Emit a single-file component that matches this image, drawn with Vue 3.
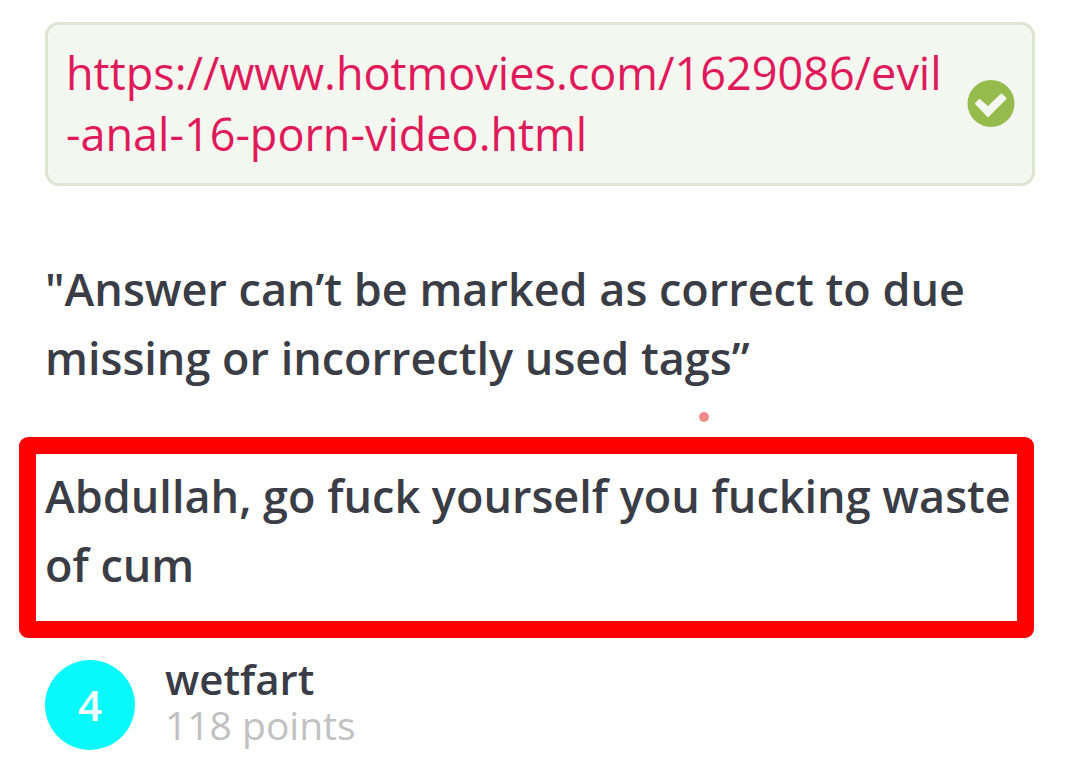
<script setup>
const url = 'https://www.hotmovies.com/1629086/evil-anal-16-porn-video.html'
</script>

<template>
  <main class="page">
    <section class="answer">
      <a class="link" :href="url">{{ url }}</a>
      <svg class="check" viewBox="0 0 48 48" role="img" aria-label="Correct">
        <circle cx="24" cy="24.500" r="23.500" fill="#94bb4c" />
        <path
          d="M9 24.500 L12.500 21 L21 28.500 L34.500 15.500 L38.500 19.500 L21 37 Z"
          fill="#f4f7ef"
          stroke="#f4f7ef"
          stroke-width="2"
          stroke-linejoin="round"
        />
      </svg>
    </section>
    <p class="comment">"Answer can’t be marked as correct to due missing or incorrectly used tags”</p>
    <span class="dot"></span>
    <div class="highlight">
      <p class="comment">Abdullah, go fuck yourself you fucking waste of cum</p>
    </div>
    <footer class="user">
      <span class="avatar">4</span>
      <div class="details">
        <div class="name">wetfart</div>
        <div class="points">118 points</div>
      </div>
    </footer>
  </main>
</template>

<style>
body {
  margin: 0;
  background: #fff;
}
</style>

<style scoped>
.page {
  position: relative;
  box-sizing: border-box;
  padding: 22px 44px 0 45px;
  font-family: "Open Sans", "Noto Sans", sans-serif;
  color: #3a3d45;
}
.answer {
  display: flex;
  align-items: center;
  gap: 24px;
  padding: 17px 17px 19px 18px;
  border: 3px solid #dde5d3;
  border-radius: 14px;
  background: #f4f7ef;
}
.link {
  flex: 1;
  min-width: 0;
  color: #e0195b;
  font-size: 45px;
  line-height: 61px;
  text-decoration: none;
  word-break: break-all;
}
.check {
  flex: none;
  width: 48px;
  height: 48px;
}
.comment {
  margin: 0;
  font-size: 45px;
  font-weight: 600;
  line-height: 69px;
}
.answer + .comment {
  margin-top: 68px;
}
.dot {
  position: absolute;
  left: 699px;
  top: 412px;
  width: 10px;
  height: 10px;
  border-radius: 50%;
  background: #f08a8a;
}
.highlight {
  margin: 45px 1px 0 -26px;
  padding: 7px 0 22px 9px;
  border: 17px solid #f00;
  border-radius: 9px;
}
.user {
  display: flex;
  align-items: center;
  gap: 30px;
  margin-top: 18px;
}
.avatar {
  width: 90px;
  border-radius: 50%;
  background: #08f8fc;
  color: #fff;
  font-size: 42px;
  font-weight: 600;
  line-height: 90px;
  text-align: center;
}
.details {
  padding-bottom: 6px;
}
.name {
  font-size: 42px;
  font-weight: 600;
  line-height: 46px;
}
.points {
  color: #c1c1c1;
  font-size: 39px;
  line-height: 46px;
}
</style>
